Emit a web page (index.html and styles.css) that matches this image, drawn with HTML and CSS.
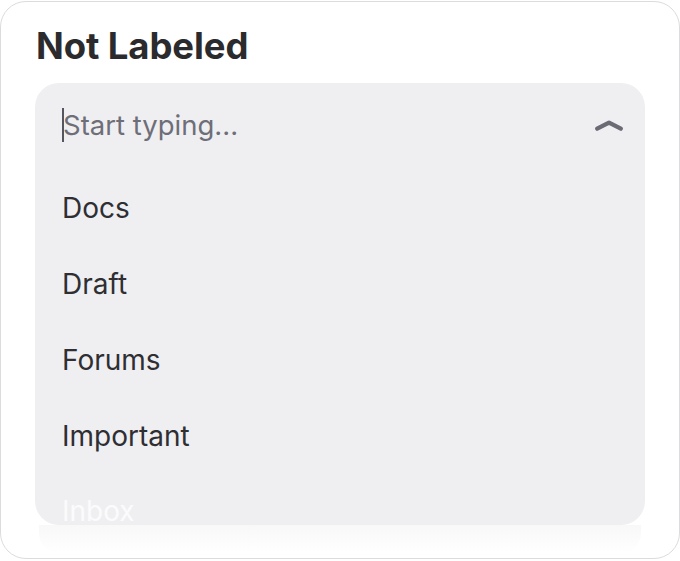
FILE: index.html
```html
<!DOCTYPE html>
<html>
<head>
<meta charset="utf-8">
<link rel="stylesheet" href="styles.css">
</head>
<body>
<div class="card">
  <h2 class="title">Not Labeled</h2>
  <div class="combo">
    <div class="input-row">
      <span class="caret"></span>
      <span class="placeholder">Start typing...</span>
      <svg class="chevron" width="30" height="12" viewBox="0 0 30 12"><path d="M3.2 8.6 L15 2.6 L26.8 8.6" fill="none" stroke="#6b6b76" stroke-width="4.4" stroke-linecap="round" stroke-linejoin="round"/></svg>
    </div>
    <ul class="options">
      <li>Docs</li>
      <li>Draft</li>
      <li>Forums</li>
      <li>Important</li>
      <li class="faded">Inbox</li>
    </ul>
  </div>
  <div class="fade"></div>
</div>
</body>
</html>
```

FILE: styles.css
```css
* { box-sizing: border-box; }
html, body { margin: 0; padding: 0; background: #ffffff; }
body { font-family: Inter, "Noto Sans", sans-serif; }

.card {
  margin-top: 1px;
  width: 680px;
  height: 558px;
  border: 1px solid #dcdcde;
  border-radius: 26px;
  background: #ffffff;
  padding: 22px 34px 0 34px;
  overflow: hidden;
}

.title {
  margin: 0 0 15px 1px;
  font-size: 36.5px;
  line-height: 44px;
  font-weight: 700;
  color: #2b2b2d;
  letter-spacing: -0.1px;
}

.combo {
  height: 442px;
  background: #efeff1;
  border-radius: 24px;
  overflow: hidden;
}

.input-row {
  display: flex;
  align-items: center;
  height: 87px;
  padding: 4px 21px 7px 27px;
  font-size: 27.5px;
  line-height: 76px;
}
.caret {
  width: 2px;
  height: 34px;
  background: #555560;
  margin-right: -1px;
}
.placeholder {
  flex: 1;
  color: #6e6e78;
}
.chevron { display: block; margin-top: 1px; }

.options {
  list-style: none;
  margin: 0;
  padding: 0 0 0 27px;
}
.options li {
  font-size: 28px;
  line-height: 76px;
  height: 76px;
  color: #2e2e33;
}
.options li.faded {
  color: #fbfbfc;
  line-height: 28px;
  height: 51px;
  padding-top: 23px;
}

.fade {
  height: 28px;
  margin: 0 4px;
  background: linear-gradient(#f8f8f9, #ffffff);
  border-radius: 0 0 20px 20px;
}
```
